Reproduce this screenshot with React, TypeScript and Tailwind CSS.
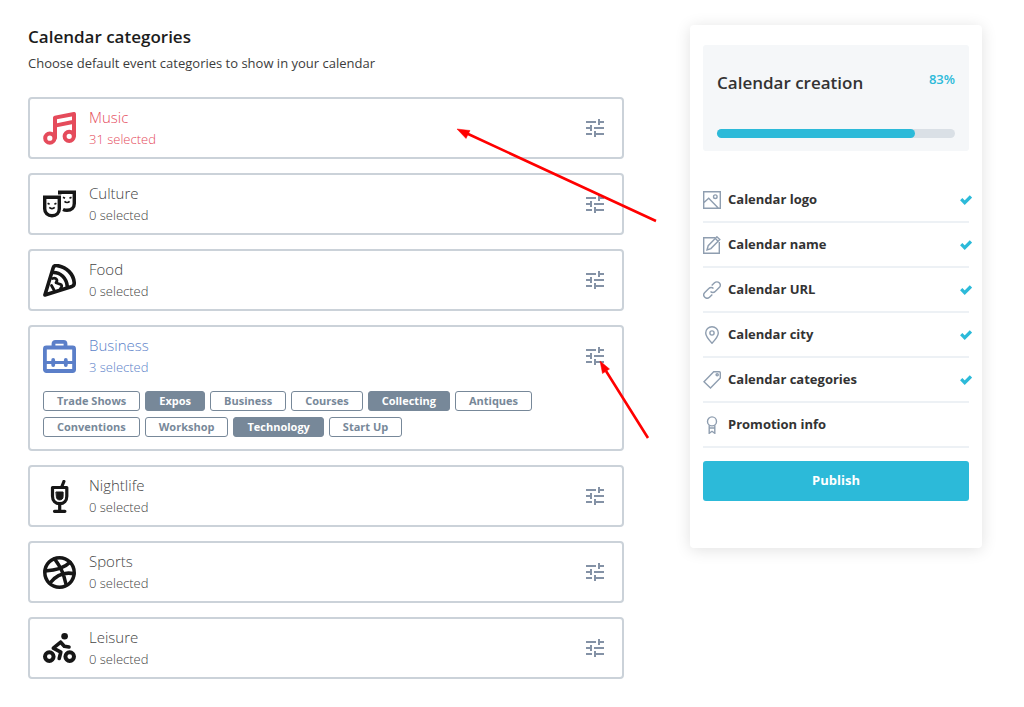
import { useState } from "react";
import type { ReactNode } from "react";
import { MdTune } from "react-icons/md";

interface Category {
  name: string;
  selected: number;
  color: string;
  textColor: string;
  icon: ReactNode;
  tags?: string[];
}

interface Step {
  label: string;
  done: boolean;
  icon: ReactNode;
}

const categories: Category[] = [
  {
    name: "Music",
    selected: 31,
    color: "text-[#e54b5b]",
    textColor: "text-[#e54b5b]",
    icon: (
      <g strokeWidth="4">
        <circle cx="6.8" cy="26.2" r="4.6" />
        <circle cx="26.2" cy="24.3" r="4.6" />
        <path d="M12 26V5.6L31 2V24M12 13.600l19-3.800" />
      </g>
    ),
  },
  {
    name: "Culture",
    selected: 0,
    color: "text-[#161616]",
    textColor: "text-[#444]",
    icon: (
      <g strokeWidth="3.400" strokeLinecap="butt" strokeLinejoin="miter">
        <path d="M1.700 9.200h14.600v11.600c0 4-3 7-7.300 7s-7.300-3-7.300-7z" />
        <path d="M16.700 6.500V4.200h14.600v11.300c0 4.300-3 6.800-7.300 6.800-1.600 0-3-.3-4-.8" />
        <path
          strokeWidth="1.700"
          d="M4.600 15.300l2 1M13.400 15.300l-2 1M6.300 19.400c1.500 1.500 3.900 1.500 5.400 0M20 9.300l2 1M28.500 9.300l-2 1M21.500 13.300c1.500 1.500 3.600 1.500 5.100 0"
        />
      </g>
    ),
  },
  {
    name: "Food",
    selected: 0,
    color: "text-[#161616]",
    textColor: "text-[#444]",
    icon: (
      <g strokeWidth="3.600">
        <path d="M10.300 3.500c.5-1.600 2-2.200 4.200-1.900C23.500 3 30.500 10 31.200 18.500c.2 2.200-.6 3.600-2.300 4L1.900 31z" />
        <path d="M10.500 8.500C17.500 8.500 23.500 14 24.300 22.500" />
        <path
          strokeWidth="2.800"
          d="M9.500 14.500c4-1.200 5.500 2 3.500 4.200l4 1.500c2 .6 2.500 2.300.5 4.300M8.500 21.500l2.500 4.500"
        />
      </g>
    ),
  },
  {
    name: "Business",
    selected: 3,
    color: "text-[#5b7fc9]",
    textColor: "text-[#5b7fc9]",
    icon: (
      <g strokeWidth="3.800">
        <rect x="1.900" y="7.500" width="29.200" height="23.500" rx="1.500" />
        <path d="M10.500 7V3.800c0-1.200.7-1.900 1.900-1.900h8.200c1.200 0 1.900.7 1.900 1.900V7" />
        <path d="M2 22.500h29" strokeWidth="3" />
        <path d="M10.200 20v5M22.800 20v5" />
      </g>
    ),
    tags: [
      "Trade Shows",
      "Expos",
      "Business",
      "Courses",
      "Collecting",
      "Antiques",
      "Conventions",
      "Workshop",
      "Technology",
      "Start Up",
    ],
  },
  {
    name: "Nightlife",
    selected: 0,
    color: "text-[#161616]",
    textColor: "text-[#444]",
    icon: (
      <g strokeWidth="3.200">
        <path d="M9.500 7.500h14.300v8.700c0 4.400-2.800 7.400-7.100 7.400s-7.200-3-7.200-7.400z" />
        <path d="M18.700 7l2.200-5.500M16.700 24v7M11.500 31.300h10.400" />
        <path
          fill="currentColor"
          strokeWidth="1"
          d="M13.300 12h6.800v4.600c0 2-1.200 3.300-3.400 3.300s-3.400-1.300-3.400-3.300z"
        />
      </g>
    ),
  },
  {
    name: "Sports",
    selected: 0,
    color: "text-[#161616]",
    textColor: "text-[#444]",
    icon: (
      <g strokeWidth="3.500">
        <circle cx="16.500" cy="16.500" r="14.700" />
        <path d="M27 6.300C21.500 12 13.500 14.300 2 15M31 17.700c-9.700-2-17.800 1.400-24 9.300M11.500 2.800c6.300 8.700 9 13.800 11.700 26.200" />
      </g>
    ),
  },
  {
    name: "Leisure",
    selected: 0,
    color: "text-[#161616]",
    textColor: "text-[#444]",
    icon: (
      <g strokeWidth="4">
        <circle cx="6.300" cy="24.600" r="4.300" />
        <circle cx="26.700" cy="24.600" r="4.300" />
        <circle cx="21.600" cy="4.300" r="3.300" fill="currentColor" stroke="none" />
        <path strokeWidth="3.600" d="M17.700 10.200l-7.400 6 7.500 4-1.600 6.300M17.700 10.200l3.600 4 4.700.8" />
      </g>
    ),
  },
];

const steps: Step[] = [
  {
    label: "Calendar logo",
    done: true,
    icon: (
      <>
        <path d="M.7.700h16.600v16.600H.7zM1 11.500l4.700-4.300 9.500 9.700" />
        <circle cx="12.300" cy="5.700" r="1.800" />
      </>
    ),
  },
  {
    label: "Calendar name",
    done: true,
    icon: (
      <>
        <path d="M12.500 1.700H.7v15.600h15.600V6" />
        <path d="M4 14l1.200-4.300 8.700-8.900 2.900 2.800-8.900 9zM12.300 2.500l2.800 2.800" />
      </>
    ),
  },
  {
    label: "Calendar URL",
    done: true,
    icon: (
      <>
        <path d="M7.500 10.500a3.300 3.300 0 0 0 4.700 0l4-4a3.300 3.300 0 0 0-4.700-4.700L8.700 4.600" />
        <path d="M10.500 7.500a3.300 3.300 0 0 0-4.700 0l-4 4a3.300 3.300 0 0 0 4.700 4.700l2.800-2.800" />
      </>
    ),
  },
  {
    label: "Calendar city",
    done: true,
    icon: (
      <>
        <path d="M9 17.300C5.500 13.500 2.700 10.300 2.700 7a6.300 6.300 0 0 1 12.600 0c0 3.300-2.800 6.500-6.300 10.300z" />
        <circle cx="9" cy="7" r="2.100" />
      </>
    ),
  },
  {
    label: "Calendar categories",
    done: true,
    icon: (
      <>
        <path d="M10.700.7h5.600a1 1 0 0 1 1 1v5.200L7.500 17 1 10.800z" />
        <circle cx="14.200" cy="3.800" r="1.100" />
      </>
    ),
  },
  {
    label: "Promotion info",
    done: false,
    icon: (
      <>
        <circle cx="9" cy="5.400" r="4.500" />
        <path d="M6.200 9.300v8l2.800-2 2.800 2v-8M6.200 12h5.600" />
      </>
    ),
  },
];

const progress = 83;

function CategoryCard({ category }: { category: Category }) {
  const [active, setActive] = useState(["Expos", "Collecting", "Technology"]);
  const { name, selected, color, textColor, icon, tags } = category;

  const toggle = (tag: string) =>
    setActive((prev) =>
      prev.includes(tag) ? prev.filter((t) => t !== tag) : [...prev, tag],
    );

  return (
    <li className="rounded-[4px] border-2 border-[#cbd2d9] bg-white pr-[15px] pl-[13px]">
      <div className="flex h-[58px] items-center justify-between">
        <button type="button" className="flex items-center gap-[13px] text-left">
          <svg
            className={`size-[33px] ${color}`}
            viewBox="0 0 33 33"
            fill="none"
            stroke="currentColor"
            strokeLinecap="round"
            strokeLinejoin="round"
            aria-hidden="true"
          >
            {icon}
          </svg>
          <span className={`flex flex-col font-light ${textColor}`}>
            <span className="text-[15px] leading-[22px]">{name}</span>
            <span className="text-[13px] leading-[22px]">{selected} selected</span>
          </span>
        </button>
        <button type="button" aria-label={`${name} settings`} className="text-[#8492a6]">
          <MdTune className="size-6" />
        </button>
      </div>

      {tags && (
        <div className="flex flex-wrap gap-x-[5px] gap-y-[6px] pt-[6px] pr-12 pb-3">
          {tags.map((tag) => (
            <button
              key={tag}
              type="button"
              aria-pressed={active.includes(tag)}
              onClick={() => toggle(tag)}
              className={`flex h-5 items-center rounded-[3px] border border-[#778899] px-[13px] pb-px text-[11px] leading-none font-bold ${
                active.includes(tag) ? "bg-[#778899] text-white" : "bg-white text-[#778899]"
              }`}
            >
              {tag}
            </button>
          ))}
        </div>
      )}
    </li>
  );
}

function CheckMark() {
  return (
    <svg
      className="-mr-[3px] ml-auto h-[10px] w-3 text-[#2cbad9]"
      viewBox="0 0 12 10"
      fill="none"
      stroke="currentColor"
      strokeWidth="3.200"
      aria-hidden="true"
    >
      <path d="M1.200 4.200l3.500 3.500L10.900 1.500" />
    </svg>
  );
}

function CreationPanel() {
  return (
    <aside className="w-[292px] shrink-0 rounded-[4px] bg-white px-[13px] pt-5 pb-[47px] shadow-[0_2px_16px_rgba(0,0,0,0.12)]">
      <div className="rounded-[3px] bg-[#f5f7f9] px-[14px] pt-[26px] pb-[13px]">
        <div className="flex items-start justify-between">
          <h2 className="text-[17px] leading-6 font-semibold text-[#333]">Calendar creation</h2>
          <span className="text-[13px] leading-4 font-semibold text-[#2cbad9]">{progress}%</span>
        </div>
        <div
          role="progressbar"
          aria-label="Calendar creation"
          aria-valuenow={progress}
          className="mt-[34px] h-[9px] rounded-full bg-[#dae0e6]"
        >
          <div className="h-full rounded-full bg-[#2cbad9]" style={{ width: `${progress}%` }} />
        </div>
      </div>

      <ul className="mt-[27px]">
        {steps.map((step) => (
          <li
            key={step.label}
            className="flex h-[45px] items-center border-b-2 border-[#edf1f5] text-[13px] font-bold text-[#333]"
          >
            <svg
              className="mr-[7px] size-[18px] text-[#8f9eb0]"
              viewBox="0 0 18 18"
              fill="none"
              stroke="currentColor"
              strokeWidth="1.400"
              aria-hidden="true"
            >
              {step.icon}
            </svg>
            {step.label}
            {step.done && <CheckMark />}
          </li>
        ))}
      </ul>

      <button
        type="button"
        className="mt-[13px] h-10 w-full rounded-[3px] bg-[#2cbad9] text-[13px] font-bold text-white"
      >
        Publish
      </button>
    </aside>
  );
}

function Arrows() {
  return (
    <svg
      className="pointer-events-none absolute top-0 left-0"
      width="680"
      height="460"
      fill="red"
      stroke="red"
      aria-hidden="true"
    >
      <path d="M466 133l190 88M606 371l42 67" strokeWidth="2.600" />
      <path d="M457 129l13 1.500-4 8zM600 361l9.500 8-7 4.500z" strokeWidth=".5" />
    </svg>
  );
}

export default function App() {
  return (
    <div className="relative flex min-h-screen items-start gap-[66px] bg-white pt-[25px] pr-[42px] pb-7 pl-7 font-['Open_Sans',sans-serif]">
      <main className="min-w-0 flex-1">
        <h1 className="text-[17px] leading-6 font-semibold text-[#1c1c1c]">Calendar categories</h1>
        <p className="mt-1 text-[13px] leading-5 text-[#3c3c3c]">
          Choose default event categories to show in your calendar
        </p>
        <ul className="mt-6 flex flex-col gap-[14px]">
          {categories.map((category) => (
            <CategoryCard key={category.name} category={category} />
          ))}
        </ul>
      </main>
      <CreationPanel />
      <Arrows />
    </div>
  );
}
